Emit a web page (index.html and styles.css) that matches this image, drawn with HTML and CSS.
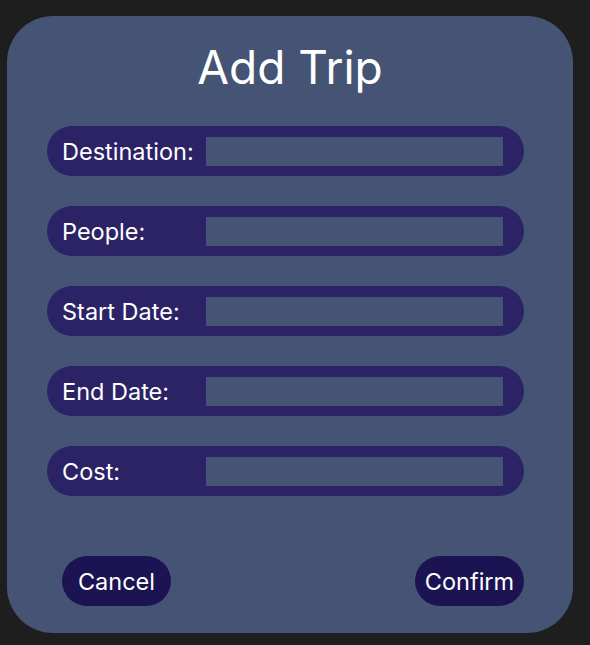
FILE: index.html
```html
<!DOCTYPE html>
<html>
<head>
<meta charset="utf-8">
<link rel="stylesheet" href="styles.css">
</head>
<body>
<div class="card">
  <h1 class="title">Add Trip</h1>
  <div class="fields">
    <label class="row"><span class="label">Destination:</span><span class="input"></span></label>
    <label class="row"><span class="label">People:</span><span class="input"></span></label>
    <label class="row"><span class="label">Start Date:</span><span class="input"></span></label>
    <label class="row"><span class="label">End Date:</span><span class="input"></span></label>
    <label class="row"><span class="label">Cost:</span><span class="input"></span></label>
  </div>
  <div class="actions">
    <button class="btn">Cancel</button>
    <button class="btn">Confirm</button>
  </div>
</div>
</body>
</html>
```
FILE: styles.css
```css
html, body {
  margin: 0;
  padding: 0;
  background: #1e1e1e;
}
body {
  padding: 16px 17px 12px 7px;
  font-family: Inter, "Noto Sans", sans-serif;
  color: #ffffff;
}
.card {
  width: 566px;
  height: 617px;
  box-sizing: border-box;
  background: #455474;
  border-radius: 46px;
  padding: 22px 49px 27px 40px;
  display: flex;
  flex-direction: column;
}
.title {
  margin: 0 0 30px 0;
  font-size: 46px;
  font-weight: 400;
  line-height: 58px;
  text-align: center;
  padding-left: 9px;
}
.fields {
  display: flex;
  flex-direction: column;
  gap: 30px;
}
.row {
  display: flex;
  align-items: center;
  height: 50px;
  background: #2c2266;
  border-radius: 25px;
  padding: 0 21px 0 15px;
}
.label {
  width: 144px;
  flex: none;
  font-size: 23.5px;
  white-space: nowrap;
}
.input {
  flex: 1;
  height: 29px;
  background: #455474;
}
.actions {
  margin-top: auto;
  display: flex;
  justify-content: space-between;
  padding-left: 15px;
}
.btn {
  height: 50px;
  width: 109px;
  border: none;
  border-radius: 25px;
  background: #1b1352;
  color: #ffffff;
  font-family: Inter, "Noto Sans", sans-serif;
  font-size: 23.5px;
  padding: 0;
}
```
